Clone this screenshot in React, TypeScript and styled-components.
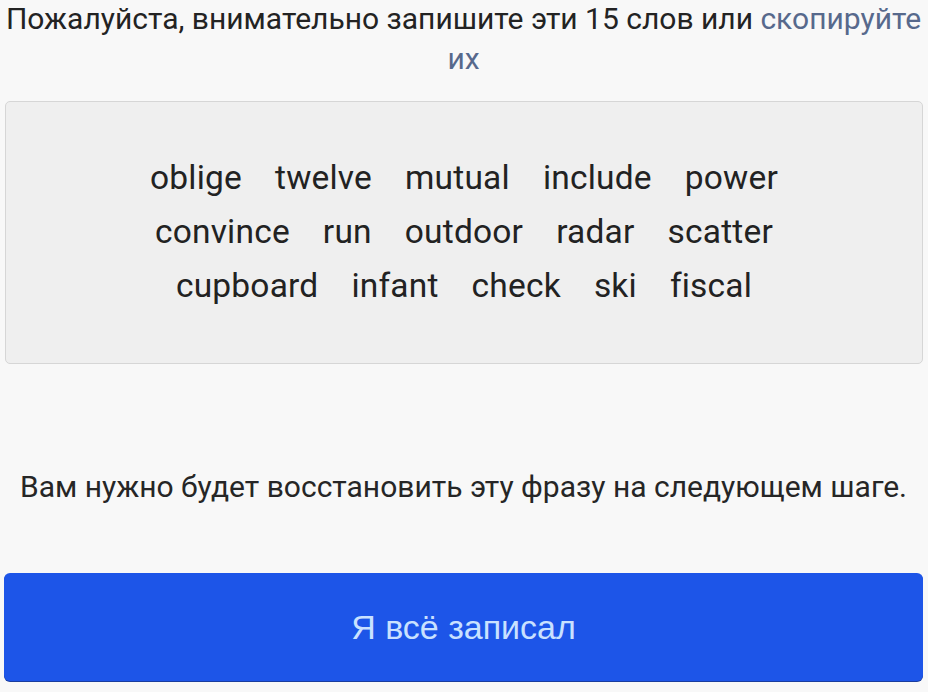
import React from 'react';
import styled, { createGlobalStyle } from 'styled-components';

const GlobalStyle = createGlobalStyle`
  html, body {
    margin: 0;
    padding: 0;
    background: #f8f8f8;
  }
  body {
    font-family: Roboto, "Noto Sans", sans-serif;
  }
`;

const Page = styled.div`
  width: 928px;
  height: 692px;
  display: flex;
  flex-direction: column;
  box-sizing: border-box;
  padding: 0 5px 11px 4px;
  overflow: hidden;
`;

const Title = styled.p`
  margin: -1px 0 0;
  font-size: 30px;
  line-height: 40px;
  color: #232323;
  text-align: center;
`;

const Link = styled.span`
  color: #57698c;
`;

const Card = styled.div`
  margin-top: 22px;
  margin-left: 1px;
  height: 263px;
  box-sizing: border-box;
  background: #efefef;
  border: 1px solid #d6d6d6;
  border-radius: 5px;
  display: flex;
  flex-direction: column;
  align-items: center;
  justify-content: center;
  padding-bottom: 2px;
`;

const WordRow = styled.div`
  display: flex;
  justify-content: center;
  gap: 33px;
  font-size: 33.5px;
  line-height: 54px;
  color: #222;
  letter-spacing: 0.2px;
`;

const Hint = styled.p`
  margin: 0;
  flex: 1;
  display: flex;
  align-items: center;
  justify-content: center;
  font-size: 30px;
  color: #262626;
  padding-top: 36px;
`;

const Button = styled.button`
  height: 108px;
  border: none;
  border-radius: 6px;
  background: #1d55e8;
  box-shadow: 0 1px 0 #1a3c9e;
  color: #c9e1ff;
  font-family: "Liberation Sans", Arial, sans-serif;
  font-size: 34px;
  cursor: pointer;
`;

const rows = [
  ['oblige', 'twelve', 'mutual', 'include', 'power'],
  ['convince', 'run', 'outdoor', 'radar', 'scatter'],
  ['cupboard', 'infant', 'check', 'ski', 'fiscal'],
];

const App = () => (
  <>
    <GlobalStyle />
    <Page>
      <Title>
        Пожалуйста, внимательно запишите эти 15 слов или <Link>скопируйте</Link>{' '}
        <Link>их</Link>
      </Title>
      <Card>
        {rows.map((row) => (
          <WordRow key={row[0]}>
            {row.map((w) => (
              <span key={w}>{w}</span>
            ))}
          </WordRow>
        ))}
      </Card>
      <Hint>Вам нужно будет восстановить эту фразу на следующем шаге.</Hint>
      <Button>Я всё записал</Button>
    </Page>
  </>
);

export default App;
